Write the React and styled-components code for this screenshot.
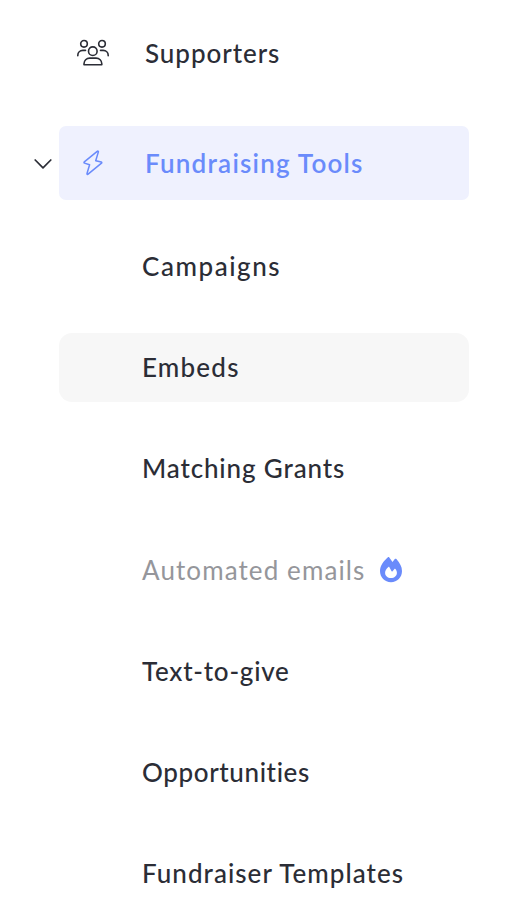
import React from "react";
import styled, { createGlobalStyle } from "styled-components";

const GlobalStyle = createGlobalStyle`
	body {
		margin: 0;
		background-color: #fff;
		font-family: Lato, "Open Sans", sans-serif;
	}
`;

const Sidebar = styled.nav`
	box-sizing: border-box;
	width: 524px;
	height: 924px;
	padding: 16px 55px 0 27px;
	overflow: hidden;
`;

const SectionRow = styled.div`
	display: flex;
	align-items: center;
	height: 74px;
	margin-bottom: ${({ $active }) => ($active ? "32px" : "36px")};
`;

const Toggle = styled.div`
	display: flex;
	justify-content: center;
	width: 32px;
	flex-shrink: 0;
	color: #2b2d36;
`;

const SectionLink = styled.a`
	display: flex;
	align-items: center;
	flex: 1;
	height: 100%;
	box-sizing: border-box;
	padding-left: 16px;
	border-radius: 7px;
	cursor: pointer;
	color: ${({ $active }) => ($active ? "#6a8bfb" : "#2b2d36")};
	background-color: ${({ $active }) => ($active ? "#eff1fe" : "transparent")};
`;

const IconBox = styled.span`
	display: flex;
	width: 36px;
	margin-right: 34px;
`;

const Label = styled.span`
	font-size: 26px;
	line-height: 32px;
	font-weight: ${({ $weight }) => $weight || 500};
	letter-spacing: ${({ $spacing }) => $spacing}px;
	white-space: nowrap;
`;

const SubList = styled.div`
	display: flex;
	flex-direction: column;
	gap: 32.2px;
	margin-left: 32px;
`;

const SubItem = styled.a`
	display: flex;
	align-items: center;
	gap: 14px;
	height: 69px;
	flex-shrink: 0;
	padding-left: 83px;
	border-radius: 13px;
	cursor: pointer;
	color: ${({ $muted }) => ($muted ? "#95969b" : "#2b2d36")};
	background-color: ${({ $hovered }) => ($hovered ? "#f7f7f7" : "transparent")};

	${Label} {
		padding-bottom: 1px;
	}
`;

const Svg = styled.svg`
	display: block;
	flex-shrink: 0;
	fill: none;
	stroke: currentColor;
	stroke-linecap: round;
	stroke-linejoin: round;
`;

const PeopleIcon = () => (
	<Svg width="36" height="32" viewBox="0 0 36 32" strokeWidth="1.6">
		<circle cx="9" cy="6.8" r="3.3"/>
		<circle cx="27" cy="6.8" r="3.3"/>
		<circle cx="17.8" cy="14.2" r="4.3"/>
		<path d="M2.8 18.7v-.5c0-2.8 2.2-4.8 5-4.8h2.7"/>
		<path d="M33.2 18.7v-.5c0-2.8-2.2-4.8-5-4.8h-2.7"/>
		<path d="M9 27.8v-1c0-3.2 2.5-5.7 5.7-5.7h6.4c3.2 0 5.7 2.5 5.7 5.7v1z"/>
	</Svg>
);

const BoltIcon = () => (
	<Svg width="36" height="32" viewBox="0 0 36 32" strokeWidth="1.5">
		<path d="M22.2 4.3 9.3 14.9c-.5.4-.4 1 .2 1.2l5.1 1.7-2.6 8.7c-.2.7.5 1.2 1.1.7l13.4-11c.5-.4.4-1-.2-1.2l-5.6-1.3 2.7-8.8c.2-.7-.6-1.1-1.2-.6z"/>
	</Svg>
);

const ChevronIcon = () => (
	<Svg width="20" height="12" viewBox="0 0 20 12" strokeWidth="1.7">
		<path d="m2.2 3 7.8 7.9L17.8 3"/>
	</Svg>
);

const FlameIcon = () => (
	<Svg width="24" height="28" viewBox="0 0 24 28">
		<path
			fill="#6a8bfb"
			stroke="none"
			fillRule="evenodd"
			d="M8.9 1.3c.5-.4 1-.4 1.4.2l3.2 4.4 2.3-2.8c.5-.6 1.1-.6 1.6 0C20.9 7.3 23 10.6 23 15c0 6.3-4.7 11.200-11 11.200S1 21.300 1 15C1 9.500 4.700 4.900 8.900 1.300zM9.400 11C7.400 12.700 6.100 14.600 6.100 16.800c0 3.200 2.500 5.300 5.900 5.300s5.900-2.100 5.900-5.300c0-1.500-.6-2.700-1.500-3.800-.3-.4-.7-.4-1 0l-1.800 2.300c-.3.400-.7.300-1 0l-2.200-4c-.3-.5-.6-.6-1-.3z"
		/>
	</Svg>
);

const items = [
	{ name: "Campaigns", spacing: 1.55 },
	{ name: "Embeds", spacing: 1.2, hovered: true },
	{ name: "Matching Grants", spacing: 0.87 },
	{ name: "Automated emails", spacing: 1.1, muted: true },
	{ name: "Text-to-give", spacing: 0.75 },
	{ name: "Opportunities", spacing: 0.62 },
	{ name: "Fundraiser Templates", spacing: 1.03 },
];

const App = () => {
	return <>
		<GlobalStyle/>
		<Sidebar>
			<SectionRow>
				<Toggle/>
				<SectionLink>
					<IconBox><PeopleIcon/></IconBox>
					<Label $spacing={0.95}>Supporters</Label>
				</SectionLink>
			</SectionRow>

			<SectionRow $active>
				<Toggle><ChevronIcon/></Toggle>
				<SectionLink $active>
					<IconBox><BoltIcon/></IconBox>
					<Label $spacing={1.22} $weight={600}>Fundraising Tools</Label>
				</SectionLink>
			</SectionRow>

			<SubList>
				{items.map(({ name, spacing, hovered, muted }) => (
					<SubItem key={name} $hovered={hovered} $muted={muted}>
						<Label $spacing={spacing} $weight={muted ? 400 : 500}>{name}</Label>
						{muted && <FlameIcon/>}
					</SubItem>
				))}
			</SubList>
		</Sidebar>
	</>;
};

export default App;
